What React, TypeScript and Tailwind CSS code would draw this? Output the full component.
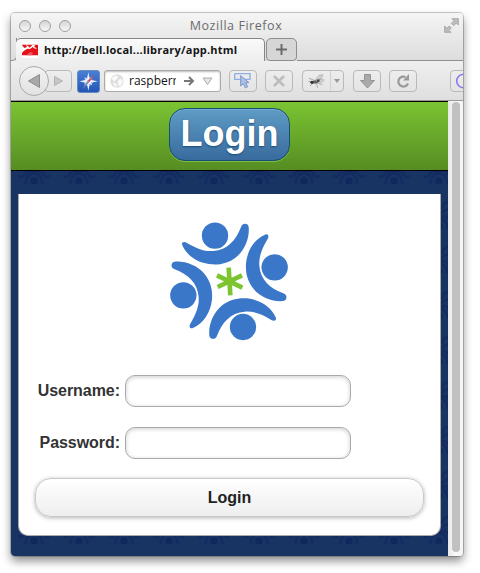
import type { ReactNode } from "react";

function ToolButton({ children, className = "w-[28px]" }: { children?: ReactNode; className?: string }) {
  return (
    <div className={`flex h-[22px] shrink-0 items-center justify-center rounded-[4px] border border-[#b9b9b9] bg-gradient-to-b from-[#ededed] to-[#e4e4e4] ${className}`}>
      {children}
    </div>
  );
}

function TitleBar() {
  return (
    <div className="flex h-[25px] shrink-0 items-center pl-[8px] pr-[4px]">
      <div className="flex w-[54px] gap-[8px]">
        {[0, 1, 2].map((i) => (
          <div key={i} className="size-[12px] shrink-0 rounded-full border border-[#a0a0a0] bg-gradient-to-b from-[#d5d5d5] to-[#f7f7f7]" />
        ))}
      </div>
      <div className="flex-1 pt-[2px] text-center font-['Open_Sans',sans-serif] text-[12.5px] tracking-[0.55px] text-[#6c6c6c]">
        Mozilla Firefox
      </div>
      <div className="flex w-[60px] justify-end">
        <svg width="15" height="15" viewBox="0 0 45 45" fill="#bdbdbd" stroke="#929292" strokeWidth="2">
          <path d="M24 2h19v19l-6-6-8 8-7-7 8-8z" />
          <path d="M2 24v19h19l-6-6 7-7-6-6-8 7z" />
        </svg>
      </div>
    </div>
  );
}

function TabStrip() {
  return (
    <div className="flex h-[23px] shrink-0">
      <div className="w-[5px]">
        <div className="h-[23px] w-[6px] rounded-br-[5px] border-b border-r border-[#8a8a8a]" />
      </div>
      <div className="flex h-[23px] w-[249px] items-center rounded-t-[5px] border-r border-t border-[#858585] bg-gradient-to-b from-[#fafafa] to-[#eeeeee] pl-[6px]">
        <svg width="16" height="16" viewBox="0 0 48 48">
          <path d="M0 0h48v48H0z" fill="#fff" />
          <path d="M0 8h48v32H0z" fill="#e51219" />
          <path d="M0 10l7 8 8-3-3-7 7 5 4 4 8-8 10-1-5 5 9 8-9-2-4-4-8 6-8-1-11 7-11 13h-4l10-17-10-8z" fill="#fff" />
          <path d="M17 35l8-5 8 3-4 7H16z" fill="#ef555a" />
        </svg>
        <span className="ml-[6px] whitespace-nowrap font-['Open_Sans',sans-serif] text-[11px] font-bold tracking-[0.22px] text-[#151515]">
          http://bell.local...library/app.html
        </span>
      </div>
      <div className="ml-px flex h-[23px] w-[31px] items-center justify-center rounded-b-[4px] rounded-t-[5px] border border-[#8e8e8e] bg-[#d6d6d6]">
        <svg width="11" height="11" viewBox="0 0 11 11" stroke="#6b6b6b" strokeWidth="2"><path d="M5.5 0v11M0 5.5h11" /></svg>
      </div>
      <div className="mt-[22px] h-px flex-1 bg-[#8e8e8e]" />
    </div>
  );
}

function Toolbar() {
  return (
    <div className="flex h-[40px] shrink-0 items-center overflow-hidden border-b border-[#999] bg-gradient-to-b from-[#efefef] to-[#dfdfdf] pl-[8px] pt-px">
      <div className="z-10 flex size-[30px] shrink-0 items-center justify-center rounded-full border border-[#a9a9a9] bg-gradient-to-b from-[#f2f2f2] to-[#e2e2e2]">
        <svg width="12" height="14" viewBox="0 0 12 14"><path d="M.5 7L11.5.5v13z" fill="#a8a8a8" stroke="#8c8c8c" /></svg>
      </div>
      <ToolButton className="-ml-[5px] w-[28px]">
        <svg width="9" height="10" viewBox="0 0 9 10"><path d="M8.500 5L.5.5v9z" fill="#c6c6c6" stroke="#b2b2b2" /></svg>
      </ToolButton>
      <div className="ml-[5px] size-[23px] shrink-0 overflow-hidden rounded-[3px] border border-[#668abc] bg-gradient-to-b from-[#487fd5] to-[#2356b8]">
        <svg width="21" height="21" viewBox="0 0 63 63">
          <circle cx="31" cy="31" r="13" fill="none" stroke="#6d97dc" strokeWidth="3" />
          <path d="M31 4l4 19 8-4-4 8 20 4-20 4 4 8-8-4-4 20-4-20-8 4 4-8-19-4 19-4-4-8 8 4z" fill="#edf4ff" />
          <path d="M50 11L34 34l-6-5z" fill="#e34b50" />
          <path d="M28 29l6 5-20 20z" fill="#7d91b0" />
        </svg>
      </div>
      <div className="ml-[4px] flex h-[22px] w-[117px] shrink-0 items-center rounded-[3px] border border-[#aaa] bg-white shadow-[inset_0_1px_2px_#bbb]">
        <svg className="ml-[5px]" width="14" height="14" viewBox="0 0 42 42">
          <circle cx="21" cy="21" r="20" fill="#dedede" />
          <path d="M4 12L18 4l7 5-6 8-8 5zM24 20l8-7 7 8-4 11-8 5-3-8zM9 25l10 4 2 9-8-2z" fill="#f9f9f9" />
        </svg>
        <span className="ml-[5px] w-[47px] overflow-hidden whitespace-nowrap font-['Open_Sans',sans-serif] text-[12px] leading-[18px] text-[#111]">raspberr</span>
        <svg className="ml-[7px]" width="12" height="12" viewBox="0 0 12 12" fill="none" stroke="#777" strokeWidth="2"><path d="M1 6h9M6 2l4 4-4 4" /></svg>
        <svg className="ml-[7px]" width="11" height="9" viewBox="0 0 11 9"><path d="M1 1h9L5.500 7.500z" fill="#e7e7e7" stroke="#aaa" /></svg>
      </div>
      <ToolButton className="ml-[8px] w-[28px]">
        <svg width="18" height="18" viewBox="0 0 54 54">
          <path d="M2 5h46v17H34M18 22H2V5" fill="none" stroke="#8faee2" strokeWidth="4" />
          <path d="M20 11v31l8-7 6 13 7-4-6-12h10z" fill="#aebfe1" stroke="#7897ce" strokeWidth="3" />
        </svg>
      </ToolButton>
      <ToolButton className="ml-[8px] w-[28px]">
        <svg width="12" height="12" viewBox="0 0 12 12" stroke="#bdbdbd" strokeWidth="2.600"><path d="M1 1l10 10M11 1L1 11" /></svg>
      </ToolButton>
      <ToolButton className="ml-[9px] w-[42px]">
        <div className="flex h-full w-[28px] items-center justify-center border-r border-[#d0d0d0]">
          <svg width="17" height="15" viewBox="0 0 51 45">
            <path d="M17 18L3 13M15 22L1 23M15 28L6 36M29 27l14 5M26 31l3 10" stroke="#888" strokeWidth="2" />
            <path d="M20 20L33 4l12-2-5 12zM25 23l11-8 13 3-8 7z" fill="#d0d0d0" stroke="#9a9a9a" strokeWidth="1.500" />
            <ellipse cx="22" cy="24" rx="9" ry="5" fill="#666" /><circle cx="12" cy="25" r="5" fill="#333" /><circle cx="31" cy="20" r="4" fill="#444" />
          </svg>
        </div>
        <div className="flex flex-1 justify-center"><svg width="6" height="4" viewBox="0 0 6 4"><path d="M0 0h6L3 4z" fill="#999" /></svg></div>
      </ToolButton>
      <ToolButton className="ml-[9px] w-[28px]">
        <svg width="15" height="15" viewBox="0 0 15 15"><path d="M4.500 .5h6v6h4L7.500 14 .5 6.500h4z" fill="#aaa" stroke="#949494" /></svg>
      </ToolButton>
      <ToolButton className="ml-[8px] w-[28px]">
        <svg width="14" height="14" viewBox="0 0 14 14"><path d="M9.500 3A5 5 0 1 0 12 9.500" fill="none" stroke="#999" strokeWidth="2.200" /><path d="M13 0v6.500H7z" fill="#999" /></svg>
      </ToolButton>
      <ToolButton className="ml-[33px] w-[28px]">
        <svg width="17" height="16" viewBox="0 0 17 16"><circle cx="7.500" cy="8" r="6.800" fill="none" stroke="#8a75ee" strokeWidth="1.500" /></svg>
      </ToolButton>
    </div>
  );
}

function Logo() {
  return (
    <svg className="mx-auto block" width="140" height="135" viewBox="0 0 420 405">
      {[0, 90, 180, 270].map((a) => (
        <g key={a} transform={`rotate(${a} 207 199)`} fill="#3a77c8">
          <circle cx="165" cy="62" r="39.500" />
          <path d="M67 91C63 82 71 78 80 83C110 101 134 110 160 108C202 105 228 76 243 36C248 22 265 25 266 36C269 66 256 103 230 125C206 145 179 150 153 148C113 144 80 122 67 91Z" />
        </g>
      ))}
      <path d="M206 158l5 83M171 181l76 37M246 181l-73 35" stroke="#7dc530" strokeWidth="14" />
    </svg>
  );
}

function Backdrop() {
  return (
    <svg className="absolute inset-0" width="437" height="385">
      <defs>
        <pattern id="damask" width="45" height="45" patternUnits="userSpaceOnUse" x="0.500" y="-32">
          <g fill="none" stroke="#132b60" strokeWidth="2.600" strokeLinecap="round">
            <path d="M22.500 34Q15 35 14 44M22.500 34Q30 35 31 44M22 33Q15 30 12 37Q10 39 7.500 37M23 33Q30 30 33 37Q35 39 37.500 37" />
            <path d="M22.500 32V18M20 29Q14 22 8 28M25 29Q31 22 37 28M20 24Q17 16 11 19M25 24Q28 16 34 19" />
          </g>
          <circle cx="22.500" cy="42" r="3.800" fill="#10285e" />
        </pattern>
      </defs>
      <rect width="437" height="385" fill="url(#damask)" />
    </svg>
  );
}

function Field({ label }: { label: string }) {
  return (
    <div className="flex h-[32px] items-center">
      <div className="w-[101px] whitespace-nowrap text-right text-[16px] font-bold leading-[20px] tracking-[-0.05px] text-[#333]">{label}</div>
      <div className="ml-[5px] h-[32px] w-[226px] rounded-[10px] border border-[#aaa] bg-white shadow-[inset_0_1px_4px_rgba(0,0,0,0.2)]" />
    </div>
  );
}

export default function App() {
  return (
    <div className="h-[573px] w-[480px] overflow-hidden bg-white pl-[11px] pt-[13px] font-['Liberation_Sans',Arial,sans-serif]">
      <div className="flex h-[543px] w-[452px] flex-col overflow-hidden rounded-[4px] bg-gradient-to-b from-[#f5f5f5] to-[#dcdcdc] to-[48px] shadow-[0_0_0_1px_rgba(0,0,0,0.2),0_5px_10px_rgba(0,0,0,0.45)]">
        <TitleBar />
        <TabStrip />
        <Toolbar />
        <div className="flex flex-1">
          <div className="flex w-[437px] flex-col bg-[#173463]">
            <div className="flex h-[70px] shrink-0 items-start justify-center border-b border-t border-black bg-gradient-to-b from-[#7bc433] to-[#568d22] pt-[6px]">
              <div className="flex h-[53px] w-[121px] items-center justify-center rounded-[16px] border border-[#145072] bg-gradient-to-b from-[#5f9cc5] to-[#396b9e] pb-[1px] shadow-[inset_0_1px_0_#79add0,0_1px_0_rgba(190,240,130,0.4)]">
                <span className="text-[36px] font-bold leading-none text-white [text-shadow:0_1px_2px_#194b73]">Login</span>
              </div>
            </div>
            <div className="relative flex-1 pt-[23px]">
              <Backdrop />
              <div className="relative ml-[7px] h-[342px] w-[423px] rounded-b-[10px] border-x border-b border-[#aaa] bg-white pt-[21px]">
                <Logo />
                <div className="mt-[25px] flex flex-col gap-[20px]">
                  <Field label="Username:" />
                  <Field label="Password:" />
                </div>
                <div className="ml-[16px] mt-[19px] flex h-[39px] w-[389px] items-center justify-center rounded-[16px] border border-[#c8c8c8] bg-gradient-to-b from-white to-[#eeeeee] text-[16px] font-bold text-[#222] shadow-[0_1px_4px_rgba(0,0,0,0.3)]">
                  Login
                </div>
              </div>
            </div>
          </div>
          <div className="flex w-[15px] justify-center bg-gradient-to-r from-[#e9e9e9] via-[#fafafa] to-[#f5f5f5] pb-[4px] pt-[1px]">
            <div className="w-[8px] rounded-full bg-[#c1c1c1]" />
          </div>
        </div>
      </div>
    </div>
  );
}
